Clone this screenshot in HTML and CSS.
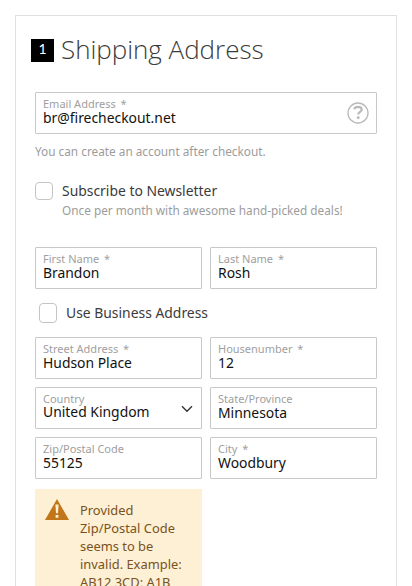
FILE: index.html
```html
<!DOCTYPE html>
<html lang="en">
<head>
<meta charset="utf-8">
<title>Shipping Address</title>
<link rel="stylesheet" href="styles.css">
</head>
<body>
<main class="card">
  <h1 class="title"><span class="step">1</span><span class="title-text">Shipping Address</span></h1>
  <form class="form">
    <div class="field email">
      <div class="content"><span class="label">Email Address <i class="req">*</i></span><span class="value">br@firecheckout.net</span></div>
      <svg class="help" viewBox="0 0 22 22" width="22" height="22" fill="none" stroke="#b9b9b9"><circle cx="11" cy="11" r="10" stroke-width="1.3"/><path d="M7.300 7.300C7.700 5.600 9.100 4.900 11 4.900c2.200 0 3.700 1 3.700 2.700 0 2.400-3.500 2.300-3.500 5" stroke-width="2.200"/><path d="M11.200 14.400v2.500" stroke-width="2.600"/></svg>
    </div>
    <p class="note">You can create an account after checkout.</p>
    <div class="check newsletter"><span class="box"></span><span class="check-label">Subscribe to Newsletter</span></div>
    <p class="note hint">Once per month with awesome hand-picked deals!</p>
    <div class="row names">
      <div class="field"><div class="content"><span class="label">First Name <i class="req">*</i></span><span class="value">Brandon</span></div></div>
      <div class="field"><div class="content"><span class="label">Last Name <i class="req">*</i></span><span class="value">Rosh</span></div></div>
    </div>
    <div class="check business"><span class="box"></span><span class="check-label">Use Business Address</span></div>
    <div class="row address">
      <div class="field"><div class="content"><span class="label">Street Address <i class="req">*</i></span><span class="value">Hudson Place</span></div></div>
      <div class="field"><div class="content"><span class="label">Housenumber <i class="req">*</i></span><span class="value">12</span></div></div>
      <div class="field select"><div class="content"><span class="label">Country</span><span class="value">United Kingdom</span></div>
        <svg class="chevron" viewBox="0 0 12 8" width="12" height="8" fill="none" stroke="#333" stroke-width="1.400"><path d="M1 1.200l5 5 5-5"/></svg>
      </div>
      <div class="field"><div class="content"><span class="label">State/Province</span><span class="value">Minnesota</span></div></div>
      <div class="field"><div class="content"><span class="label">Zip/Postal Code</span><span class="value">55125</span></div></div>
      <div class="field"><div class="content"><span class="label">City <i class="req">*</i></span><span class="value">Woodbury</span></div></div>
    </div>
    <div class="warning">
      <svg class="alert" viewBox="0 0 24 21" width="24" height="21"><path d="M12 0l12 21H0z" fill="#c07619"/><path d="M10.400 5.500h3.200l-.6 8.800h-2z M10.600 16h2.800v2.700h-2.800z" fill="#fdf0d5"/></svg>
      <p class="message">Provided Zip/Postal Code seems to be invalid. Example: AB12 3CD; A1B</p>
    </div>
  </form>
</main>
</body>
</html>
```
FILE: styles.css
```css
* { box-sizing: border-box; }
html, body { height: 586px; overflow: hidden; }
body {
  margin: 0;
  padding: 15px 15px 0;
  background: #fff;
  color: #3b3b3b;
  font-family: "Noto Sans", sans-serif;
}
.card {
  width: 382px;
  height: 571px;
  border: 1px solid #e0e0e0;
  border-bottom: 0;
  padding: 15px 19px 0 15px;
  overflow: hidden;
}
.title {
  display: flex;
  align-items: center;
  height: 38px;
  margin: 0;
  font: 300 26px/38px "Open Sans", sans-serif;
}
.step {
  width: 23px;
  height: 23px;
  margin-right: 7px;
  background: #000;
  color: #fff;
  font: 400 14px/20px Lato, sans-serif;
  text-align: center;
}
.title-text { margin-top: -2px; white-space: nowrap; letter-spacing: -.03px; }
.form { margin: 23px 0 0 4px; }
.field {
  display: flex;
  justify-content: space-between;
  height: 42px;
  border: 1px solid #c8c8c8;
  border-radius: 1px;
  padding: 4px 7px 0;
}
.content { display: flex; flex-direction: column; white-space: nowrap; }
.label { color: #a0a0a0; font-size: 11px; line-height: 14px; }
.req { margin-left: 2px; font-style: normal; }
.value { color: #111; font-size: 13.9px; line-height: 13px; }
.select .value { line-height: 11px; }
.help { margin: 5px 0 0; }
.chevron { margin: 13px 1px 0 0; }
.note { margin: 8px 0 0; color: #9c9c9c; font-size: 11.8px; line-height: 18px; white-space: nowrap; }
.check { display: flex; align-items: center; height: 20px; }
.box { width: 18px; height: 18px; border: 1px solid #c4c4c4; border-radius: 4px; }
.check-label { margin-left: 9px; font-size: 13.9px; line-height: 20px; white-space: nowrap; }
.newsletter { margin-top: 21px; }
.hint { margin: 0 0 0 27px; }
.row { display: grid; grid-template-columns: 167px 167px; gap: 8px; }
.names { margin-top: 28px; }
.business { margin: 14px 0 0 4px; }
.business .box { height: 20px; }
.address { margin-top: 14px; }
.warning {
  display: flex;
  align-items: flex-start;
  width: 167px;
  margin-top: 10px;
  padding: 12px 10px;
  background: #fdf0d5;
}
.alert { flex: none; margin-top: -2px; }
.message { margin: 0 0 0 11px; color: #7a5220; font-size: 12.9px; line-height: 18px; }
```
